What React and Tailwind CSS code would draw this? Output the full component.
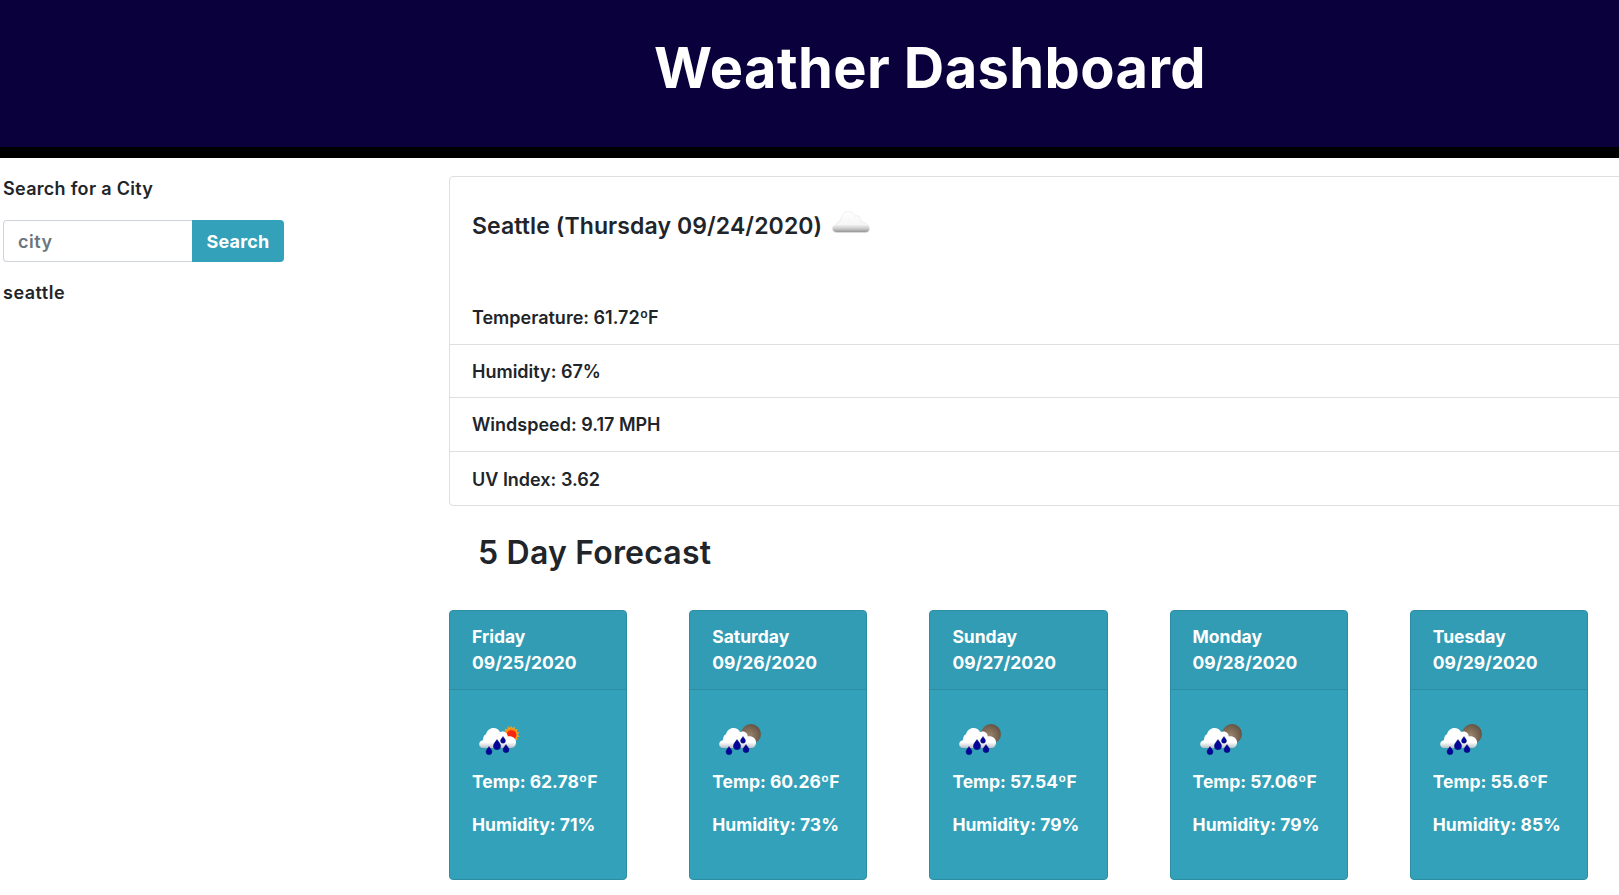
import React from 'react';

const font = { fontFamily: 'Inter, "Open Sans", sans-serif' };

const rows = ['Temperature: 61.72ºF', 'Humidity: 67%', 'Windspeed: 9.17 MPH', 'UV Index: 3.62'];

const days = [
  { day: 'Friday', date: '09/25/2020', temp: '62.78', humidity: '71', sun: true },
  { day: 'Saturday', date: '09/26/2020', temp: '60.26', humidity: '73' },
  { day: 'Sunday', date: '09/27/2020', temp: '57.54', humidity: '79' },
  { day: 'Monday', date: '09/28/2020', temp: '57.06', humidity: '79' },
  { day: 'Tuesday', date: '09/29/2020', temp: '55.6', humidity: '85' },
];

const CloudIcon = () => (
  <svg width="38" height="24" viewBox="0 0 38 24" className="block">
    <defs>
      <linearGradient id="cloud" x1="0" y1="0" x2="0" y2="1">
        <stop offset="0" stopColor="#ffffff" />
        <stop offset="0.62" stopColor="#f6f6f6" />
        <stop offset="0.82" stopColor="#c9c9c9" />
        <stop offset="1" stopColor="#8f8f8f" />
      </linearGradient>
    </defs>
    <path
      d="M5 22.500c-3 0-4.500-1.700-4.500-3.700 0-2.300 1.700-3.800 4-4.100C5 12.500 6.500 11 8.500 10.800 9 6 12 1.500 16.500 1.500c3.300 0 5.500 2 6.500 4.800 1.800-1 4-.6 5 1 .8 1.200 1 2.700.8 4.200 3.500.6 8.700 3 8.700 7.200 0 2.400-1.800 3.800-4 3.800z"
      fill="url(#cloud)"
      stroke="#e4e4e4"
      strokeWidth="0.6"
    />
  </svg>
);

const RainIcon = ({ sun, id }) => (
  <svg width="44" height="33" viewBox="0 -1 44 33" className="block">
    <defs>
      <linearGradient id={id} x1="0" y1="0" x2="0" y2="1">
        <stop offset="0" stopColor="#ffffff" />
        <stop offset="0.72" stopColor="#ffffff" />
        <stop offset="1" stopColor="#b4c0c6" />
      </linearGradient>
      <radialGradient id={`${id}-moon`} cx="0.4" cy="0.6" r="0.7">
        <stop offset="0" stopColor="#9c866e" />
        <stop offset="1" stopColor="#5f4e3e" />
      </radialGradient>
    </defs>
    {sun ? (
      <g>
        <path
          d="M32 .5l1.200 2.600 2.400-1.600.2 2.900 2.900-.4-1 2.700 2.800.8-2 2.100 2.100 2-2.900.7.9 2.800-2.900-.4-.3 2.900-2.300-1.700-1.300 2.500-1.300-2.500-2.300 1.500-.2-2.900-2.900.3 1-2.700-2.800-1 2.200-1.800-2-2.200 2.900-.6-.8-2.800 2.900.5.4-2.900 2.300 1.700z"
          fill="#f3a21d"
        />
        <circle cx="32" cy="9.500" r="6" fill="#fb8a10" />
        <circle cx="32.500" cy="10" r="4.800" fill="#f7260f" />
      </g>
    ) : (
      <circle cx="32" cy="9" r="10" fill={`url(#${id}-moon)`} />
    )}
    <path
      d="M4 23c-2.500 0-3.800-1.700-3.800-3.700 0-2.300 1.500-3.900 3.600-4.100C4.500 11 5.500 9.500 7 9.200 8 5.500 11 3 14.500 3c3 0 5.200 1.500 6.500 4 2-1 4.500-.7 6 .8 1.200 1.100 1.700 2.500 1.800 3.700 3-.6 7.700.9 8.200 5.200.3 3.300-1.800 6.300-4.500 6.300z"
      fill={`url(#${id})`}
    />
    <g fill="#06059a" stroke="#0b1a6b" strokeWidth="0.4">
      <path d="M10 21.500c1.900 2.500 3 3.700 3 5.200a3 3 0 0 1-6 0c0-1.500 1.100-2.700 3-5.200z" />
      <path d="M18 14.500c2.400 3.200 3.700 4.700 3.700 6.500a3.700 3.700 0 0 1-7.400 0c0-1.800 1.300-3.300 3.700-6.500z" />
      <path d="M24 11.500c1.600 2.100 2.500 3.100 2.500 4.300a2.500 2.500 0 0 1-5 0c0-1.200.9-2.200 2.500-4.300z" />
      <path d="M27 19.500c1.900 2.500 3 3.700 3 5.200a3 3 0 0 1-6 0c0-1.500 1.100-2.700 3-5.200z" />
    </g>
  </svg>
);

export default function App() {
  return (
    <div className="h-screen overflow-hidden bg-white text-[#212529]" style={font}>
      <header className="h-[158px] bg-[#09003c] border-b-[11px] border-black flex items-center justify-center pl-[241px] pb-[12px]">
        <h1 className="text-[56px] font-bold tracking-[0.4px] text-white leading-none">Weather Dashboard</h1>
      </header>

      <div className="flex">
        <aside className="w-[449px] shrink-0 pl-[3px] pt-[21px]">
          <p className="text-[18px] font-semibold tracking-[0.3px] leading-[20px]">Search for a City</p>
          <div className="flex mt-[21px] w-[281px] h-[42px]">
            <div className="w-[189px] border border-[#ced4da] border-r-0 rounded-l-[4px] pl-[14px] pt-[1px] flex items-center text-[#6c757d] text-[18px] font-semibold tracking-[0.5px]">
              city
            </div>
            <button className="w-[92px] bg-[#33a1b9] text-white rounded-r-[4px] pt-[1px] text-[18px] font-bold tracking-[0.2px]">Search</button>
          </div>
          <p className="text-[18px] font-semibold tracking-[0.5px] mt-[21px] leading-[20px]">seattle</p>
        </aside>

        <main className="flex-1 min-w-0 pt-[18px]">
          <section className="-mr-[20px] border border-[#dfdfdf] rounded-[4px]">
            <div className="h-[114px] px-[22px] pt-[33px] flex items-start gap-[10px]">
              <h2 className="text-[23px] font-semibold tracking-[0.1px] leading-[32px]">Seattle (Thursday 09/24/2020)</h2>
              <CloudIcon />
            </div>
            {rows.map((row, i) => (
              <div key={row} className={`h-[53.600px] px-[22px] pt-[1px] flex items-center text-[18px] font-semibold ${i < 3 ? 'border-b border-[#dfdfdf]' : ''}`}>
                {row}
              </div>
            ))}
          </section>

          <h3 className="text-[32px] font-semibold tracking-[0.2px] pl-[29px] mt-[25px] leading-[44px]">5 Day Forecast</h3>

          <div className="flex gap-[62px] mt-[35px]">
            {days.map((d, i) => (
              <article key={d.day} className="w-[178.200px] h-[270px] shrink-0 bg-[#33a1b9] border border-[#2d8da2] rounded-[4px] text-white font-bold text-[17.500px]">
                <div className="h-[79px] bg-[#319cb3] border-b border-[#2d8da2] rounded-t-[3px] px-[22px] pt-[13px] leading-[25.500px]">
                  <div>{d.day}</div>
                  <div>{d.date}</div>
                </div>
                <div className="pl-[22px] pt-[34px]">
                  <div className="ml-[7px]">
                    <RainIcon sun={d.sun} id={`rain-${i}`} />
                  </div>
                  <p className="mt-[11.500px] leading-[25px]">Temp: {d.temp}ºF</p>
                  <p className="mt-[18px] leading-[25px]">Humidity: {d.humidity}%</p>
                </div>
              </article>
            ))}
          </div>
        </main>
      </div>
    </div>
  );
}
